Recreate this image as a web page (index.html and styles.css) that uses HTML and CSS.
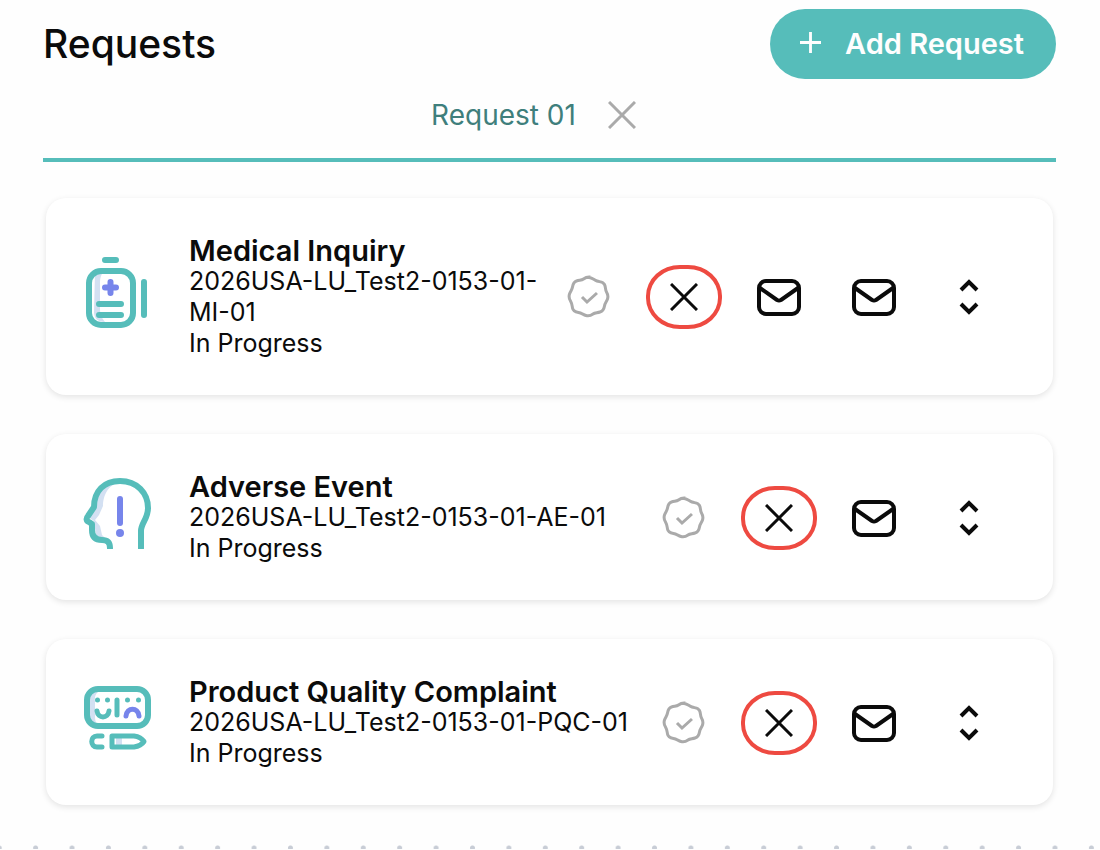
FILE: index.html
```html
<!DOCTYPE html>
<html lang="en">
<head>
<meta charset="utf-8">
<meta name="viewport" content="width=device-width, initial-scale=1">
<title>Requests</title>
<link rel="stylesheet" href="styles.css">
</head>
<body>
<svg class="sprite" aria-hidden="true">
  <symbol id="check" viewBox="0 0 44 44"><path d="M22 2.500c3 0 5 2.500 8 3.500s6 .5 7.500 3.500.5 5 2 7.500 2 4 1 7-2.500 4-3 7-1.500 5-4.500 6-5 .5-7 2-4 2.500-7 1.500-4.500-2.500-7.500-3-5.500-1.500-6-4.500-.5-4.500-2-7-2-4-1-7 2.500-4 3-7 1-5 4-6 5-.5 7-2 3-2 5.500-2Z"/><path d="m15 22 5 5 10-9"/></symbol>
  <symbol id="close" viewBox="0 0 28 28"><path d="m1 1 26 26M27 1 1 27"/></symbol>
  <symbol id="mail" viewBox="0 0 44 38"><rect x="2" y="3" width="40" height="33" rx="7"/><path d="m3 10 17 12q2 1 4 0l17-12"/></symbol>
  <symbol id="sort" viewBox="0 0 20 38"><path d="m2 12 8-8 8 8M2 26l8 8 8-8"/></symbol>
</svg>
<main class="page">
  <header class="header">
    <h1 class="title">Requests</h1>
    <button class="add" type="button">
      <svg class="plus" viewBox="0 0 22 22" aria-hidden="true"><path d="M11 0v22M0 11h22"/></svg>
      Add Request
    </button>
  </header>
  <nav class="tabs">
    <a class="tab" href="#requests">Request 01</a>
    <button class="icon-button tab-close" type="button" aria-label="Close Request 01"><svg class="close"><use href="#close"/></svg></button>
  </nav>
  <section class="cards" id="requests">
    <article class="card">
      <svg class="kind" viewBox="0 0 72 72" aria-hidden="true">
        <path class="shade" d="M13 14q7 0 10-1-5 5-5 12v28q0 6 5 12-11 0-11-10Z"/>
        <path class="teal" d="M23 3h11M62 25v33M17 47h22M17 58h22"/>
        <rect class="teal" x="7" y="14" width="44" height="54" rx="12"/>
        <path class="violet" d="M28.500 25v11M23 30.500h11"/>
      </svg>
      <div class="info">
        <h2 class="name">Medical Inquiry</h2>
        <p class="line">2026USA-LU_Test2-0153-01-MI-01</p>
        <p class="line">In Progress</p>
      </div>
      <div class="actions">
        <button class="icon-button" type="button" aria-label="Verify"><svg class="check"><use href="#check"/></svg></button>
        <button class="icon-button ringed" type="button" aria-label="Cancel"><svg class="close"><use href="#close"/></svg></button>
        <button class="icon-button" type="button" aria-label="Email"><svg class="mail"><use href="#mail"/></svg></button>
        <button class="icon-button" type="button" aria-label="Email again"><svg class="mail"><use href="#mail"/></svg></button>
        <button class="icon-button" type="button" aria-label="Expand"><svg class="sort"><use href="#sort"/></svg></button>
      </div>
    </article>
    <article class="card">
      <svg class="kind" viewBox="0 0 72 72" aria-hidden="true">
        <path class="shade" d="M38 5C25 8 21 20 21 29l-4 9-4 5 5 6 2 9 4 4-10-3-2-15-6-4 8-13C14 14 22 4 38 4Z"/>
        <path class="teal" d="M28 71c0-6-3-8-8-8-8 0-10-5-10-10v-6l-3-2c-3-1-3-4-1-6l6-9C12 14 22 4 38 4c17 0 28 12 28 27 0 11-7 15-7 23v17" stroke-linecap="butt"/>
        <path class="violet" d="M38 22v24"/>
        <circle class="violet-fill" cx="38" cy="56" r="4"/>
      </svg>
      <div class="info">
        <h2 class="name">Adverse Event</h2>
        <p class="line">2026USA-LU_Test2-0153-01-AE-01</p>
        <p class="line">In Progress</p>
      </div>
      <div class="actions">
        <button class="icon-button" type="button" aria-label="Verify"><svg class="check"><use href="#check"/></svg></button>
        <button class="icon-button ringed" type="button" aria-label="Cancel"><svg class="close"><use href="#close"/></svg></button>
        <button class="icon-button" type="button" aria-label="Email"><svg class="mail"><use href="#mail"/></svg></button>
        <button class="icon-button" type="button" aria-label="Expand"><svg class="sort"><use href="#sort"/></svg></button>
      </div>
    </article>
    <article class="card">
      <svg class="kind" viewBox="0 0 72 72" aria-hidden="true">
        <path class="shade" d="M8 10h8q-4 3-3 10v14q0 6 2 8H8ZM34 56h6v8h-6Z"/>
        <rect class="teal" x="5" y="7" width="61" height="37" rx="11"/>
        <path class="teal thin" d="M35 18v15M15 29c1 8 11 8 12 0M20 54h-5c-7 0-7 11 0 11h5M30 54h22q7 1 10 5.500-3 4.500-10 5.500H30Z"/>
        <path class="violet thin" d="M44 34c1-9 12-9 13 0"/>
        <path class="teal-fill" d="M13 18a2 2 0 0 1 5 0 2 2 0 0 1-5 0M23 18a2 2 0 0 1 5 0 2 2 0 0 1-5 0M43 18a2 2 0 0 1 5 0 2 2 0 0 1-5 0M54 18a2 2 0 0 1 5 0 2 2 0 0 1-5 0"/>
      </svg>
      <div class="info">
        <h2 class="name">Product Quality Complaint</h2>
        <p class="line">2026USA-LU_Test2-0153-01-PQC-01</p>
        <p class="line">In Progress</p>
      </div>
      <div class="actions">
        <button class="icon-button" type="button" aria-label="Verify"><svg class="check"><use href="#check"/></svg></button>
        <button class="icon-button ringed" type="button" aria-label="Cancel"><svg class="close"><use href="#close"/></svg></button>
        <button class="icon-button" type="button" aria-label="Email"><svg class="mail"><use href="#mail"/></svg></button>
        <button class="icon-button" type="button" aria-label="Expand"><svg class="sort"><use href="#sort"/></svg></button>
      </div>
    </article>
  </section>
</main>
<div class="dots"></div>
</body>
</html>
```
FILE: styles.css
```css
* { box-sizing: border-box; }
body {
  margin: 0;
  overflow-x: hidden;
  background: #fefefe;
  color: #0b0b0b;
  font-family: Inter, "Liberation Sans", sans-serif;
}
h1, h2, p { margin: 0; }
svg { fill: none; stroke: currentColor; display: block; flex: none; }
.sprite { position: absolute; width: 0; height: 0; }
.page { padding: 9px 44px 0 43px; }
.header { display: flex; justify-content: space-between; align-items: center; }
.title { font-size: 39px; font-weight: 500; line-height: 48px; }
.add {
  display: flex;
  align-items: center;
  gap: 24px;
  padding: 0 32px 0 30px;
  height: 70px;
  border: 0;
  border-radius: 36px;
  background: #56bdba;
  color: #fefefe;
  font: 600 29px/36px Inter, "Liberation Sans", sans-serif;
}
.plus { width: 21px; height: 21px; margin-bottom: 3px; stroke-width: 3; }
.tabs {
  display: flex;
  justify-content: center;
  align-items: center;
  gap: 32px;
  height: 83px;
  padding: 0 32px 7px 0;
  border-bottom: 4px solid #56bdba;
}
.tab { color: #3f7f7c; font-size: 28px; line-height: 36px; text-decoration: none; }
.cards { display: flex; flex-direction: column; gap: 39px; padding: 36px 3px 40px; }
.card {
  display: flex;
  align-items: center;
  padding: 37px 46px 36px 36px;
  border-radius: 20px;
  background: #fff;
  box-shadow: 0 2px 6px rgba(0, 0, 0, 0.11);
}
.kind { width: 72px; height: 72px; margin: 0 35px 9px 0; }
.teal, .violet { stroke-width: 6; stroke-linecap: round; stroke-linejoin: round; }
.thin { stroke-width: 5; }
.teal { stroke: #56bdba; }
.violet { stroke: #7785eb; }
.violet-fill { fill: #7785eb; stroke: none; }
.teal-fill { fill: #56bdba; stroke: none; }
.shade { fill: #d3e0f2; stroke: none; }
.info { flex: 1; min-width: 0; }
.name { font-size: 29px; font-weight: 600; line-height: 31px; white-space: nowrap; }
.line { font-size: 25px; line-height: 31px; }
.actions { display: flex; }
.icon-button {
  display: flex;
  align-items: center;
  justify-content: center;
  padding: 0;
  border: 0;
  background: none;
  color: #0b0b0b;
}
.actions .icon-button { width: 76px; height: 64px; margin-left: 19px; }
.actions .icon-button:first-child { margin-left: 0; }
.actions .ringed { border: 4px solid #ee4a41; border-radius: 34px / 31px; }
.icon-button.tab-close { color: #aaa; }
.check { width: 44px; height: 44px; color: #aaa; stroke-width: 3; }
.close { width: 28px; height: 28px; stroke-width: 3; }
.mail { width: 44px; height: 38px; stroke-width: 4; }
.sort { width: 20px; height: 38px; stroke-width: 4; }
.dots {
  height: 4px;
  margin: 0 -10px 0 -19px;
  background: radial-gradient(circle at 50% 3px, #c8cdd6 2px, transparent 3px) 0 0 / 36px 4px round;
}
```
